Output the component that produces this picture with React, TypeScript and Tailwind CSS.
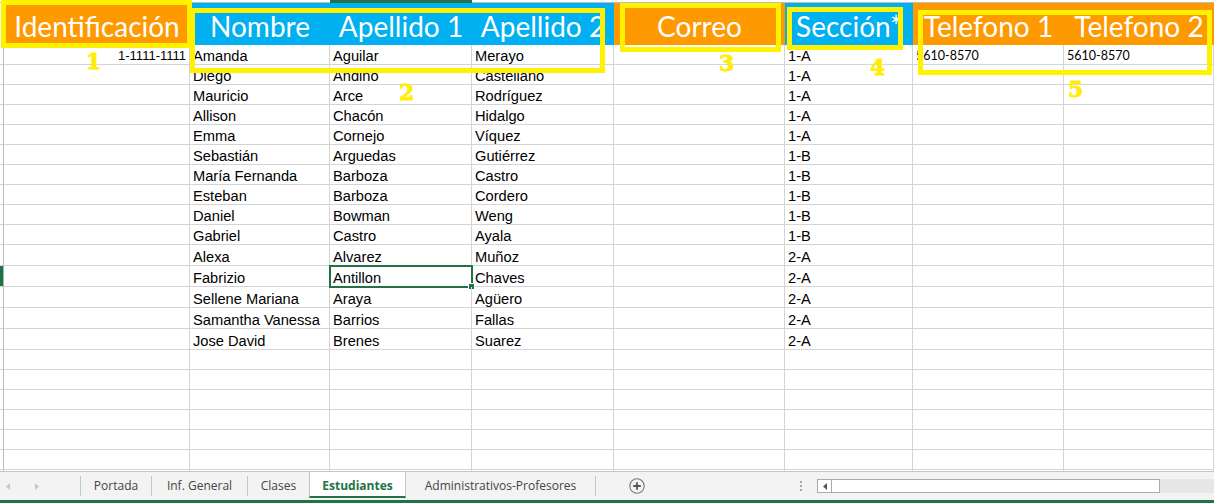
import React from "react";

const GRID =
  "grid grid-cols-[4px_186px_140px_142px_142px_171px_128px_151px_150px]";

type Student = {
  id?: string;
  nombre: string;
  ap1: string;
  ap2: string;
  seccion: string;
  tel1?: string;
  tel2?: string;
  tall?: boolean;
  selected?: boolean;
};

const students: Student[] = [
  { id: "1-1111-1111", nombre: "Amanda", ap1: "Aguilar", ap2: "Merayo", seccion: "1-A", tel1: "5610-8570", tel2: "5610-8570" },
  { nombre: "Diego", ap1: "Andino", ap2: "Castellano", seccion: "1-A" },
  { nombre: "Mauricio", ap1: "Arce", ap2: "Rodríguez", seccion: "1-A" },
  { nombre: "Allison", ap1: "Chacón", ap2: "Hidalgo", seccion: "1-A" },
  { nombre: "Emma", ap1: "Cornejo", ap2: "Víquez", seccion: "1-A" },
  { nombre: "Sebastián", ap1: "Arguedas", ap2: "Gutiérrez", seccion: "1-B" },
  { nombre: "María Fernanda", ap1: "Barboza", ap2: "Castro", seccion: "1-B" },
  { nombre: "Esteban", ap1: "Barboza", ap2: "Cordero", seccion: "1-B" },
  { nombre: "Daniel", ap1: "Bowman", ap2: "Weng", seccion: "1-B" },
  { nombre: "Gabriel", ap1: "Castro", ap2: "Ayala", seccion: "1-B" },
  { nombre: "Alexa", ap1: "Alvarez", ap2: "Muñoz", seccion: "2-A", tall: true },
  { nombre: "Fabrizio", ap1: "Antillon", ap2: "Chaves", seccion: "2-A", tall: true, selected: true },
  { nombre: "Sellene Mariana", ap1: "Araya", ap2: "Agüero", seccion: "2-A", tall: true },
  { nombre: "Samantha Vanessa", ap1: "Barrios", ap2: "Fallas", seccion: "2-A", tall: true },
  { nombre: "Jose David", ap1: "Brenes", ap2: "Suarez", seccion: "2-A", tall: true },
];

const cell =
  "border-r border-b border-[#d4d4d4] flex items-end leading-[16px] whitespace-nowrap text-[14.67px] text-black font-['Liberation_Sans',Arial,sans-serif]";

const RowHead = ({ active }: { active?: boolean }) => (
  <div
    className={
      active
        ? "border-b border-[#d4d4d4] bg-[#217346] border-r border-r-[#9fb9a9]"
        : "border-b border-[#d4d4d4] border-r border-r-[#bdbdbd] bg-white"
    }
  />
);

const StudentRow = ({ s }: { s: Student }) => (
  <div className={`${GRID} ${s.tall ? "h-[21px]" : "h-[20px]"}`}>
    <RowHead active={s.selected} />
    <div className={`${cell} justify-end pr-[3px]`}>
      {s.id && <span className="text-[13px]">{s.id}</span>}
    </div>
    <div className={`${cell} pl-[3px]`}>{s.nombre}</div>
    <div className={`${cell} pl-[3px] relative`}>
      {s.ap1}
      {s.selected && (
        <>
          <div className="absolute -left-[1px] -top-[1px] w-[144px] h-[23px] border-2 border-[#217346]" />
          <div className="absolute left-[138px] top-[17px] w-[7px] h-[7px] bg-[#217346] border border-white" />
        </>
      )}
    </div>
    <div className={`${cell} pl-[3px]`}>{s.ap2}</div>
    <div className={cell} />
    <div className={`${cell} pl-[3px]`}>{s.seccion}</div>
    <div className={`${cell} pl-[3px]`}>
      {s.tel1 && (
        <span className="font-['Lato',sans-serif] text-[12.5px]">{s.tel1}</span>
      )}
    </div>
    <div className={`${cell} pl-[3px]`}>
      {s.tel2 && (
        <span className="font-['Lato',sans-serif] text-[12.5px]">{s.tel2}</span>
      )}
    </div>
  </div>
);

const EmptyRow = () => (
  <div className={`${GRID} h-[20px]`}>
    <RowHead />
    {Array.from({ length: 8 }).map((_, i) => (
      <div key={i} className="border-r border-b border-[#d4d4d4]" />
    ))}
  </div>
);

const head =
  "flex items-start justify-center pt-[9px] whitespace-nowrap text-white text-[28px] leading-none font-['Lato',sans-serif]";

const Box = ({ className }: { className: string }) => (
  <div className={`absolute border-[5px] border-[#fff200] ${className}`} />
);

const Num = ({ n, className }: { n: string; className: string }) => (
  <div
    className={`absolute text-[22px] leading-none font-bold text-[#ffee00] [-webkit-text-stroke:0.8px_#ffee00] font-['DejaVu_Serif',serif] ${className}`}
  >
    {n}
  </div>
);

const Tab = ({ label, w }: { label: string; w: string }) => (
  <div className={`${w} flex items-center justify-center text-[12px] text-[#444] font-['Open_Sans',sans-serif]`}>
    {label}
  </div>
);

const Sep = () => <div className="w-px h-[20px] bg-[#c6c6c6]" />;

const Tri = ({ dir, color }: { dir: "l" | "r"; color: string }) => (
  <svg width="4" height="7" viewBox="0 0 4 7">
    <path d={dir === "l" ? "M4 0L0 3.5L4 7Z" : "M0 0L4 3.5L0 7Z"} fill={color} />
  </svg>
);

export default function App() {
  return (
    <div className="w-[1214px] h-[503px] bg-white overflow-hidden flex flex-col">
      <div className="relative h-[471px] overflow-hidden">
        {/* column header strip */}
        <div className={`${GRID} h-[3px]`}>
          <div className="border-b border-[#bdbdbd]" />
          <div className="border-b border-[#bdbdbd]" />
          <div className="border-b border-[#bdbdbd]" />
          <div className="bg-[#217346]" />
          <div className="border-b border-[#bdbdbd]" />
          <div className="border-b border-[#bdbdbd]" />
          <div className="border-b border-[#bdbdbd]" />
          <div className="border-b border-[#bdbdbd]" />
          <div className="border-b border-[#bdbdbd]" />
        </div>

        {/* header row */}
        <div className={`${GRID} h-[42px]`}>
          <div className="border-r border-[#bdbdbd]" />
          <div className={`${head} bg-[#ff9900]`}>Identificación</div>
          <div className={`${head} bg-[#00b0f0]`}>Nombre</div>
          <div className={`${head} bg-[#00b0f0]`}>Apellido 1</div>
          <div className={`${head} bg-[#00b0f0]`}>Apellido 2</div>
          <div className={`${head} bg-[#ff9900]`}>Correo</div>
          <div className={`${head} bg-[#00b0f0]`}>Sección*</div>
          <div className={`${head} bg-[#ff9900]`}>Telefono 1</div>
          <div className={`${head} bg-[#ff9900]`}>Telefono 2</div>
        </div>

        {students.map((s) => (
          <StudentRow key={s.nombre} s={s} />
        ))}
        {Array.from({ length: 7 }).map((_, i) => (
          <EmptyRow key={i} />
        ))}

        {/* annotations */}
        <Box className="left-[1px] top-0 w-[191px] h-[48px]" />
        <Box className="left-[190px] top-[8px] w-[415px] h-[65px]" />
        <Box className="left-[620px] top-[3px] w-[161px] h-[49px]" />
        <Box className="left-[787px] top-[7px] w-[116px] h-[43px]" />
        <Box className="left-[918px] top-[10px] w-[294px] h-[65px]" />
        <Num n="1" className="left-[86px] top-[50px]" />
        <Num n="2" className="left-[399px] top-[81px]" />
        <Num n="3" className="left-[719px] top-[52px]" />
        <Num n="4" className="left-[870px] top-[56px]" />
        <Num n="5" className="left-[1068px] top-[78px]" />
      </div>

      {/* sheet tabs */}
      <div className="h-[29px] bg-[#f3f3f3] border-t border-[#c6c6c6] flex items-center">
        <div className="w-[80px] flex items-center">
          <div className="ml-[6px]">
            <Tri dir="l" color="#c8c8c8" />
          </div>
          <div className="ml-[25px]">
            <Tri dir="r" color="#c8c8c8" />
          </div>
        </div>
        <Sep />
        <Tab label="Portada" w="w-[70px]" />
        <Sep />
        <Tab label="Inf. General" w="w-[95px]" />
        <Sep />
        <Tab label="Clases" w="w-[61px]" />
        <div className="w-[97px] self-stretch bg-white border-x border-[#c6c6c6] border-b-2 border-b-[#217346] mb-[2px] pt-[3px] flex items-center justify-center text-[12px] font-bold text-[#217346] font-['Open_Sans',sans-serif]">
          Estudiantes
        </div>
        <Tab label="Administrativos-Profesores" w="w-[189px]" />
        <Sep />
        <div className="w-[33px]" />
        <svg width="16" height="16" viewBox="0 0 16 16">
          <circle cx="8" cy="8" r="7.2" fill="none" stroke="#777" strokeWidth="1.1" />
          <path d="M8 4.2v7.6M4.2 8h7.6" stroke="#555" strokeWidth="1.8" />
        </svg>
        <div className="w-[154px]" />
        <div className="w-[4px] flex flex-col items-center gap-[2px]">
          <div className="w-[2px] h-[2px] bg-[#a8a8a8]" />
          <div className="w-[2px] h-[2px] bg-[#a8a8a8]" />
          <div className="w-[2px] h-[2px] bg-[#a8a8a8]" />
        </div>
        <div className="w-[14px]" />
        <div className="w-[343px] h-[14px] bg-white border border-[#ababab] flex">
          <div className="w-[14px] border-r border-[#ababab] flex items-center justify-center">
            <Tri dir="l" color="#555" />
          </div>
        </div>
        <div className="flex-1 h-[14px] bg-[#e6e6e6]" />
      </div>
      <div className="h-[3px] bg-[#217346]" />
    </div>
  );
}
